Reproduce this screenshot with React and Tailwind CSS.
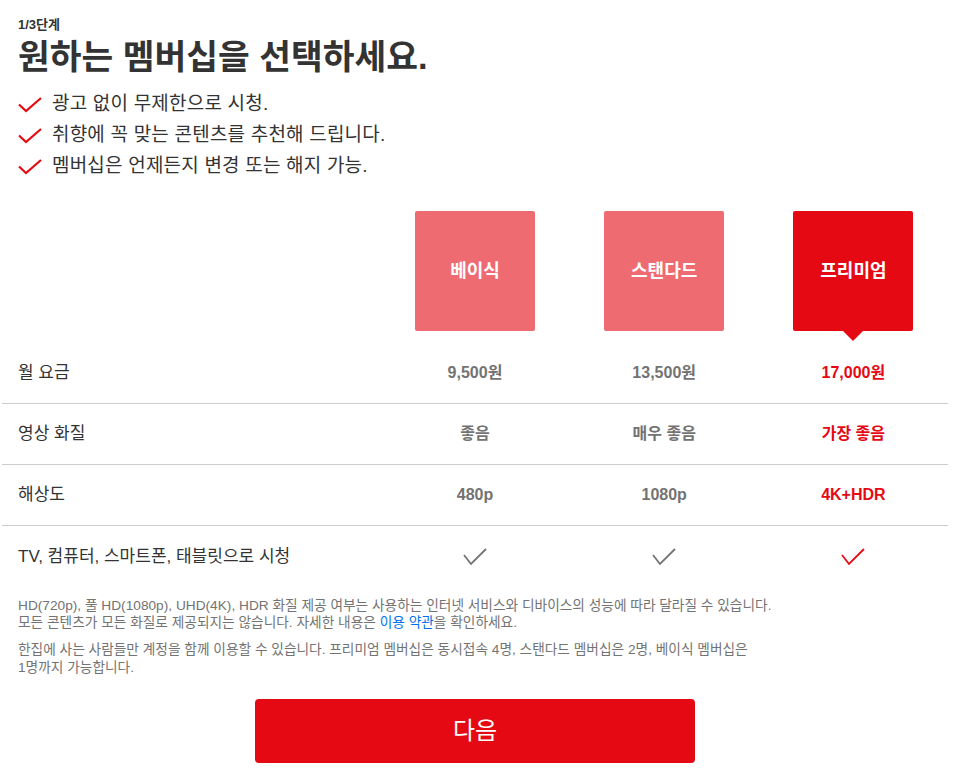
import React from 'react';

// Plan chooser — step 1 of 3
const plans = [
  { name: '베이식', price: '9,500원', quality: '좋음', res: '480p' },
  { name: '스탠다드', price: '13,500원', quality: '매우 좋음', res: '1080p' },
  { name: '프리미엄', price: '17,000원', quality: '가장 좋음', res: '4K+HDR' },
];

const selected = 2;

const perks = [
  '광고 없이 무제한으로 시청.',
  '취향에 꼭 맞는 콘텐츠를 추천해 드립니다.',
  '멤버십은 언제든지 변경 또는 해지 가능.',
];

function RedCheck() {
  return (
    <svg width="24" height="16" viewBox="0 0 24 16" className="shrink-0">
      <path d="M1 7.5 L8 14 L23 1" fill="none" stroke="#e50914" strokeWidth="2.2" />
    </svg>
  );
}

function TableCheck({ red }) {
  return (
    <svg width="24" height="18" viewBox="0 0 24 18">
      <path
        d="M1 7 L8 16 L23 1"
        fill="none"
        stroke={red ? '#e50914' : '#737373'}
        strokeWidth="1.8"
      />
    </svg>
  );
}

function Row({ label, values, last }) {
  return (
    <div
      className={
        'grid grid-cols-[2fr_1fr_1fr_1fr] h-[61px] items-center ' +
        (last ? '' : 'border-b border-[#cccccc]')
      }
    >
      <div className="pl-4 text-[17px] text-[#333333]">{label}</div>
      {values.map((v, i) => (
        <div
          key={i}
          className={
            'flex justify-center text-[16px] font-bold ' +
            (i === selected ? 'text-[#e50914]' : 'text-[#737373]')
          }
        >
          {v}
        </div>
      ))}
    </div>
  );
}

export default function App() {
  return (
    <div
      className="bg-white text-[#333333] min-h-[776px] pl-[2px] w-[948px]"
      style={{ fontFamily: '"Liberation Sans", "Noto Sans CJK KR", sans-serif' }}
    >
      {/* ---- Header ---- */}
      <div className="pl-4 pt-[16px]">
        <div className="text-[13px] font-bold leading-[18px] text-[#333333]">1/3단계</div>
        <h1 className="text-[34.5px] font-bold leading-[42px] text-[#333333] mt-[2px]">
          원하는 멤버십을 선택하세요.
        </h1>
        <ul className="mt-[11px] flex flex-col">
          {perks.map((p) => (
            <li key={p} className="flex items-center gap-[10px] h-[31px] text-[19px] tracking-[0.2px] text-[#333333]">
              <RedCheck />
              <span>{p}</span>
            </li>
          ))}
        </ul>
      </div>

      {/* ---- Plan boxes ---- */}
      <div className="grid grid-cols-[2fr_1fr_1fr_1fr] mt-[29px] h-[132px]">
        <div />
        {plans.map((p, i) => (
          <div key={p.name} className="flex justify-center">
            <div className="relative">
              <div
                className={
                  'w-[120px] h-[120px] rounded-[2px] flex items-center justify-center text-white text-[18px] font-bold ' +
                  (i === selected ? 'bg-[#e50914]' : 'bg-[#ef6b72]')
                }
              >
                {p.name}
              </div>
              {i === selected && (
                <div className="absolute left-1/2 -translate-x-1/2 top-[120px] w-0 h-0 border-l-[10px] border-r-[10px] border-t-[10px] border-l-transparent border-r-transparent border-t-[#e50914]" />
              )}
            </div>
          </div>
        ))}
      </div>

      {/* ---- Comparison table ---- */}
      <div>
        <Row label="월 요금" values={plans.map((p) => p.price)} />
        <Row label="영상 화질" values={plans.map((p) => p.quality)} />
        <Row label="해상도" values={plans.map((p) => p.res)} />
        <div className="grid grid-cols-[2fr_1fr_1fr_1fr] h-[61px] items-center">
          <div className="pl-4 text-[17px] text-[#333333]">TV, 컴퓨터, 스마트폰, 태블릿으로 시청</div>
          {plans.map((p, i) => (
            <div key={p.name} className="flex justify-center">
              <TableCheck red={i === selected} />
            </div>
          ))}
        </div>
      </div>

      {/* ---- Fine print ---- */}
      <div className="pl-4 pt-[10px] text-[13.7px] leading-[17px] text-[#737373]">
        <p>
          HD(720p), 풀 HD(1080p), UHD(4K), HDR 화질 제공 여부는 사용하는 인터넷 서비스와 디바이스의 성능에 따라 달라질 수 있습니다.
          <br />
          모든 콘텐츠가 모든 화질로 제공되지는 않습니다. 자세한 내용은 <span className="text-[#0071eb]">이용 약관</span>을 확인하세요.
        </p>
        <p className="mt-[10px] leading-[18px]">
          한집에 사는 사람들만 계정을 함께 이용할 수 있습니다. 프리미엄 멤버십은 동시접속 4명, 스탠다드 멤버십은 2명, 베이식 멤버십은
          <br />
          1명까지 가능합니다.
        </p>
      </div>

      {/* ---- Next ---- */}
      <div className="flex justify-center mt-[22px]">
        <button
          type="button"
          className="w-[440px] h-[64px] rounded-[4px] bg-[#e50914] text-white text-[24px]"
        >
          다음
        </button>
      </div>
    </div>
  );
}
